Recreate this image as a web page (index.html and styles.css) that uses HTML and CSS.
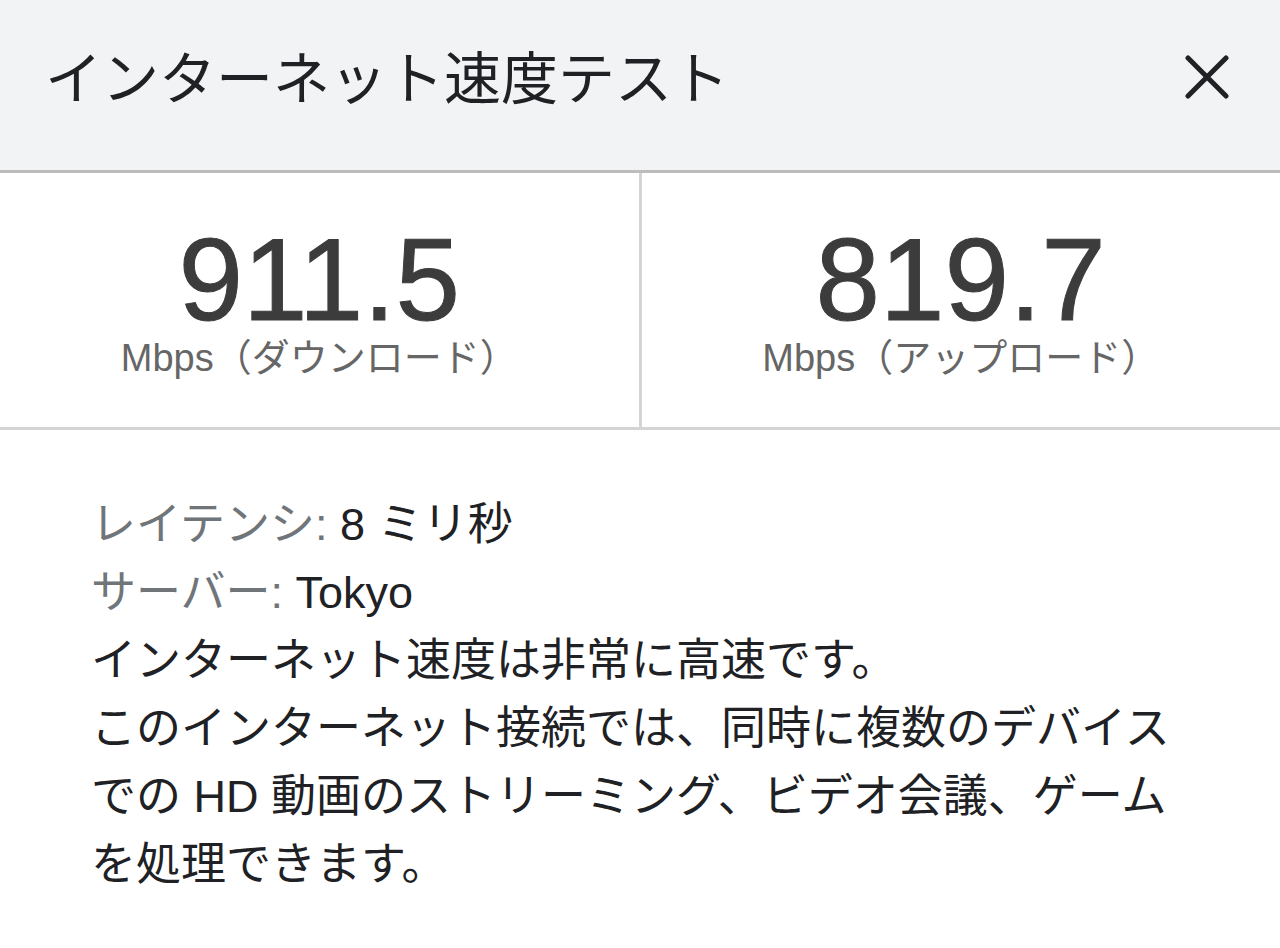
FILE: index.html
```html
<!DOCTYPE html>
<html lang="ja">
<head>
<meta charset="utf-8">
<meta name="viewport" content="width=device-width, initial-scale=1.0">
<title>インターネット速度テスト</title>
<link rel="stylesheet" href="styles.css">
</head>
<body>

<div class="dialog">
  <!--header with title and close button-->
  <div class="dialog-header">
    <h1 class="dialog-title">インターネット速度テスト</h1>
    <button class="close-btn" aria-label="閉じる">
      <svg width="44" height="44" viewBox="0 0 44 44">
        <path d="M3 3 L41 41 M41 3 L3 41" stroke="#202124" stroke-width="5" stroke-linecap="round" fill="none"/>
      </svg>
    </button>
  </div>

  <!--download and upload results-->
  <div class="speed-row">
    <div class="speed-cell">
      <div class="speed-value">911.5</div>
      <div class="speed-unit">Mbps（ダウンロード）</div>
    </div>
    <div class="speed-cell">
      <div class="speed-value">819.7</div>
      <div class="speed-unit">Mbps（アップロード）</div>
    </div>
  </div>

  <!--details-->
  <div class="details">
    <p><span class="label">レイテンシ:</span> 8 ミリ秒</p>
    <p><span class="label">サーバー:</span> Tokyo</p>
    <p>インターネット速度は非常に高速です。</p>
    <p class="summary">このインターネット接続では、同時に複数のデバイスでの HD 動画のストリーミング、ビデオ会議、ゲームを処理できます。</p>
  </div>
</div>

</body>
</html>
```

FILE: styles.css
```css
* {box-sizing: border-box;}

body {
  margin: 0;
  background: #fff;
  font-family: "Liberation Sans", "Noto Sans CJK JP", sans-serif;
  color: #202124;
}

/*header*/

.dialog-header {
  height: 173px;
  background: #f1f3f4;
  border-bottom: 3px solid #bcbcbc;
  display: flex;
  align-items: center;
  justify-content: space-between;
  padding: 0 51px 12px 45px;
}

.dialog-title {
  margin: 0;
  font-size: 57px;
  font-weight: normal;
  line-height: 1;
  color: #202124;
}

.close-btn {
  background: none;
  border: 0;
  padding: 0;
  width: 44px;
  height: 44px;
  cursor: pointer;
  margin-top: -4px;
}

.close-btn svg {
  display: block;
}

/*speed results*/

.speed-row {
  display: flex;
  border-bottom: 3px solid #d4d4d4;
}

.speed-cell {
  flex: 1;
  display: flex;
  flex-direction: column;
  align-items: center;
  padding: 49px 0 49px;
}

.speed-cell + .speed-cell {
  border-left: 3px solid #d4d4d4;
}

.speed-value {
  font-size: 116px;
  line-height: 116px;
  color: #3c3c3c;
  -webkit-text-stroke: 1px #3c3c3c;
}

.speed-unit {
  font-size: 38px;
  line-height: 40px;
  color: #666;
}

/*details*/

.details {
  padding: 61px 0 0 91px;
  width: 1200px;
}

.details p {
  margin: 0;
  font-size: 45px;
  line-height: 68px;
  color: #202124;
}

.details .label {
  color: #70757a;
}
```
